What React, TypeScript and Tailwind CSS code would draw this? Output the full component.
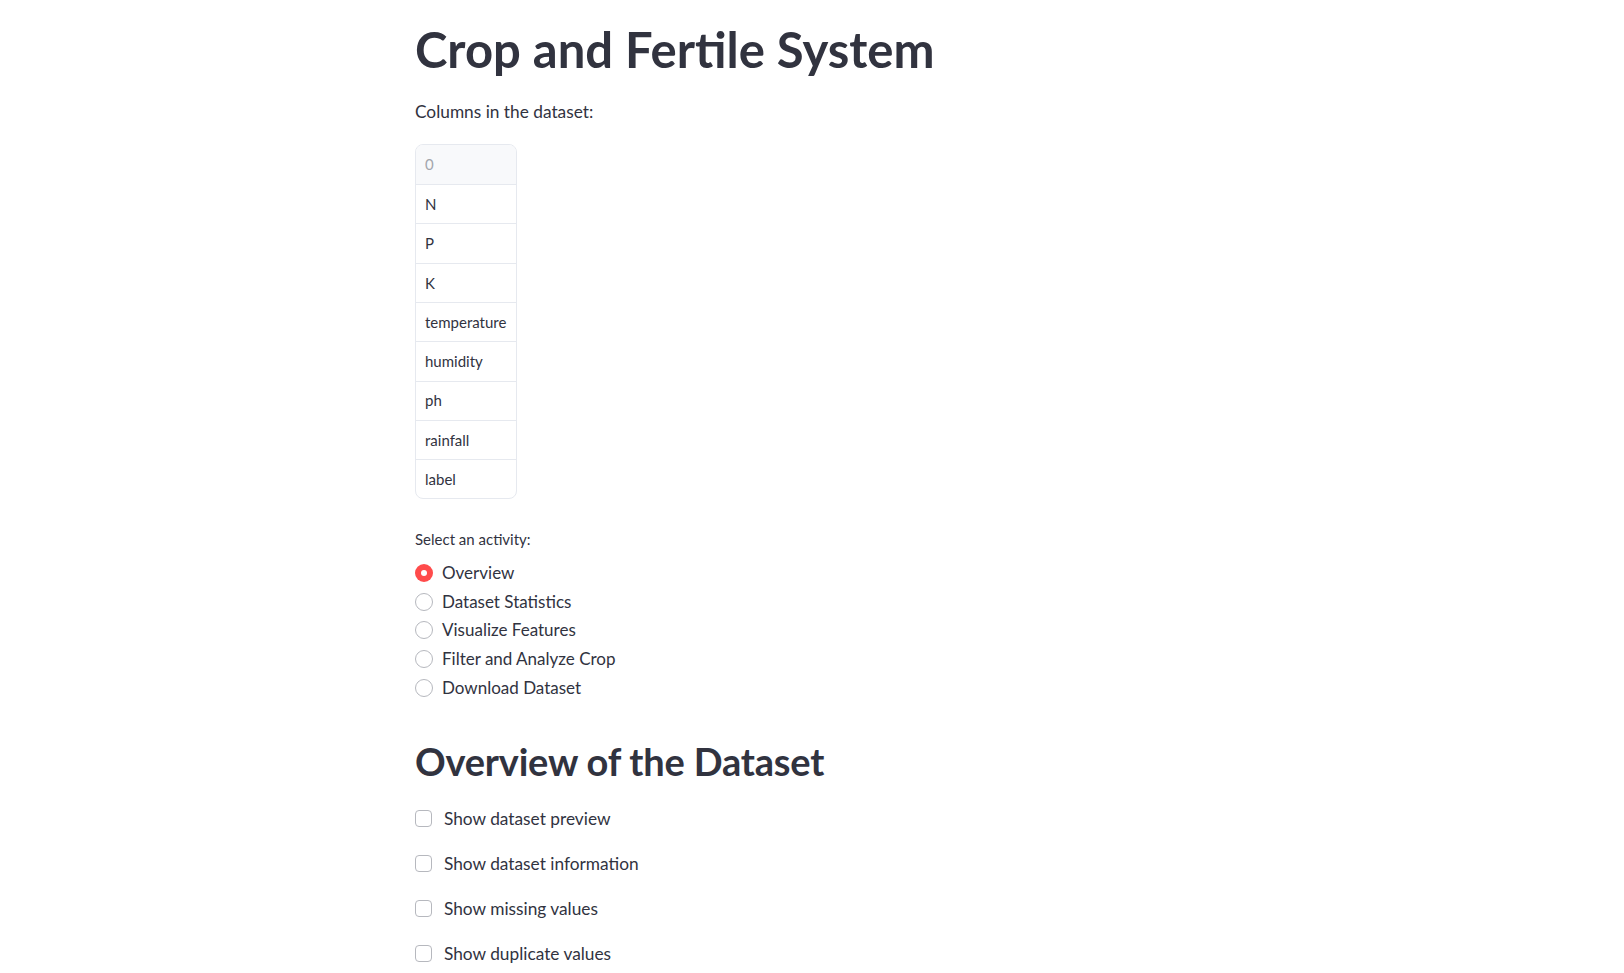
import React from "react";

const columns = ["N", "P", "K", "temperature", "humidity", "ph", "rainfall", "label"];

const activities = [
  "Overview",
  "Dataset Statistics",
  "Visualize Features",
  "Filter and Analyze Crop",
  "Download Dataset",
];

const options = [
  "Show dataset preview",
  "Show dataset information",
  "Show missing values",
  "Show duplicate values",
];

export default function App() {
  return (
    <div
      className="min-h-screen bg-white text-[#31333f]"
      style={{ fontFamily: "Lato, 'Liberation Sans', sans-serif" }}
    >
      <div className="mx-auto w-[794px] pt-[20px]">
        {/* Title */}
        <h1 className="text-[49px] font-bold leading-[1.2]">Crop and Fertile System</h1>

        <p className="mt-[19px] text-[17.3px] leading-[28px]">Columns in the dataset:</p>

        {/* Columns table */}
        <div className="mt-[18px] w-[102px] overflow-hidden rounded-[8px] border border-[#e6e9ef]">
          <div className="flex h-[39.3px] items-center bg-[#f8f9fb] px-[9px] text-[15px] text-[#a3a6ad]">
            0
          </div>
          {columns.map((c) => (
            <div
              key={c}
              className="flex h-[39.3px] items-center border-t border-[#e6e9ef] px-[9px] text-[15px] text-[#31333f]"
            >
              {c}
            </div>
          ))}
        </div>

        {/* Activity radio */}
        <p className="mt-[29px] text-[15px] leading-[22px]">Select an activity:</p>
        <div className="mt-[8px] flex flex-col">
          {activities.map((a, i) => (
            <label key={a} className="flex h-[28.75px] items-center gap-[9px]">
              {i === 0 ? (
                <span className="flex h-[18px] w-[18px] items-center justify-center rounded-full bg-[#ff4b4b]">
                  <span className="h-[6px] w-[6px] rounded-full bg-white" />
                </span>
              ) : (
                <span className="h-[18px] w-[18px] rounded-full border border-[#b6b8be] bg-white" />
              )}
              <span className="text-[17px] leading-[24px]">{a}</span>
            </label>
          ))}
        </div>

        {/* Overview section */}
        <h2 className="mt-[37px] text-[38px] font-bold leading-[1.2] tracking-[-0.2px]">
          Overview of the Dataset
        </h2>
        <div className="mt-[20px] flex flex-col gap-[17px]">
          {options.map((o) => (
            <label key={o} className="flex h-[28px] items-center gap-[12px]">
              <span className="h-[17px] w-[17px] rounded-[4px] border border-[#b6b8be] bg-white" />
              <span className="text-[17.3px] leading-[24px]">{o}</span>
            </label>
          ))}
        </div>
      </div>
    </div>
  );
}
